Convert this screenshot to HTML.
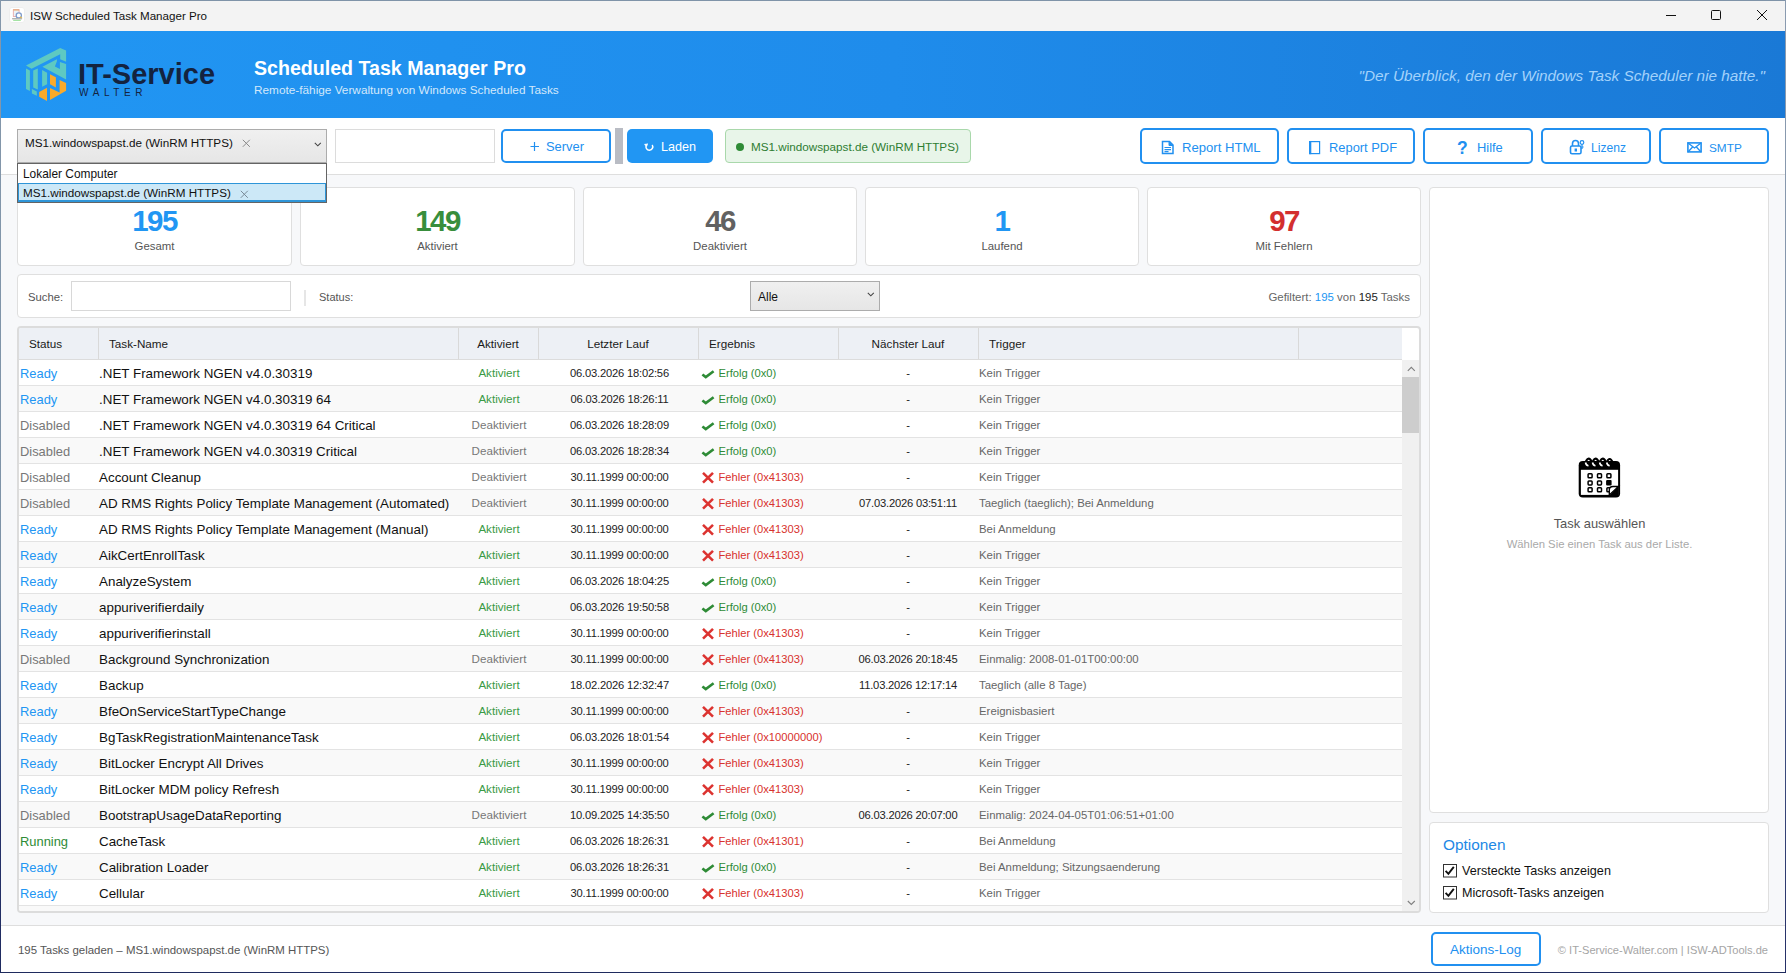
<!DOCTYPE html>
<html><head><meta charset="utf-8">
<style>
*{box-sizing:border-box;margin:0;padding:0}
html,body{width:1786px;height:973px;overflow:hidden}
body{position:relative;background:#f7f8fa;font-family:"Liberation Sans",sans-serif;color:#222}
.abs{position:absolute}
.t{position:absolute;line-height:1;white-space:nowrap}
#winborder{position:absolute;left:0;top:0;width:1786px;height:973px;border:1px solid #8496ab;border-bottom-color:#2a3a5a;pointer-events:none;z-index:50}
#titlebar{position:absolute;left:0;top:0;width:1786px;height:31px;background:#f3f3f3}
#header{position:absolute;left:0;top:31px;width:1786px;height:87px;background:linear-gradient(90deg,#2196f3 0%,#1f8ceb 50%,#1a79d6 100%)}
#toolbar{position:absolute;left:1px;top:118px;width:1784px;height:57px;background:#fff;border-bottom:1px solid #dedede}
.btn{position:absolute;top:129px;height:34px;border:2px solid #2190f0;border-radius:5px;background:#fff}
.card{position:absolute;background:#fff;border:1px solid #dfdfdf;border-radius:4px}
#table{position:absolute;left:17px;top:326px;width:1404px;height:587px;background:#fff;border:2px solid #dcdcdc;border-radius:4px;overflow:hidden}
.thead{position:absolute;left:0;top:0;width:1383px;height:32px;background:#edf0f5;border-bottom:1px solid #dcdcdc}
.thsep{position:absolute;top:0;width:1px;height:31px;background:#d9d9d9}
.row{position:absolute;left:19px;width:1383px;height:26px;border-bottom:1px solid #e3e3e3}
.row.odd{background:#fff}
.row.even{background:#f9f9f9}
.c{position:absolute;top:0;line-height:1;white-space:nowrap}
.c1{left:1px;font-size:12.9px;top:8px}
.c2{left:80px;font-size:13.4px;color:#111;top:7px}
.c3{left:440px;width:80px;text-align:center;font-size:11.6px;top:7px}
.c4{left:520.5px;width:160px;text-align:center;font-size:11.2px;letter-spacing:-0.2px;color:#222;top:8px}
.c5{left:699.5px;font-size:11.2px;top:8px}
.c6{left:819px;width:140px;text-align:center;font-size:11.2px;letter-spacing:-0.2px;color:#222;top:8px}
.c7{left:960px;font-size:11.4px;color:#666;top:8px}
.s-ready{color:#2196f3} .s-dis{color:#777} .s-run{color:#2e8b36}
.a-on{color:#3a9a45} .a-off{color:#777}
.r-ok{color:#2e8b36} .r-err{color:#d8322d}
.ic{position:absolute;left:682px}
</style></head><body>
<div id="titlebar">
 <svg class="abs" style="left:9px;top:7px" width="16" height="16" viewBox="0 0 16 16"><rect x="0.5" y="0.5" width="15" height="15" rx="2.5" fill="#fff" stroke="#eeeeee"/><rect x="4.3" y="2.6" width="5.8" height="6.8" fill="#eef3f8" stroke="#e5a1a1" stroke-width="0.8"/><rect x="4.3" y="2.4" width="5.8" height="1.2" fill="#e9b27a"/><circle cx="9.8" cy="8.4" r="2.6" fill="#fff" stroke="#7f9ccc" stroke-width="1.3"/><path d="M11.2 9.8 L13 11.4" stroke="#e6b84a" stroke-width="1.3"/><rect x="3" y="11" width="10" height="1.4" rx="0.6" fill="#b4b4b4"/><rect x="4.2" y="12.9" width="7.6" height="0.9" fill="#8fdc8f"/></svg>
 <div class="t" style="left:30px;top:10px;font-size:11.6px;color:#111;">ISW Scheduled Task Manager Pro</div>
 <svg class="abs" style="left:1666px;top:15px" width="10" height="1"><rect width="10" height="1" fill="#111"/></svg>
 <svg class="abs" style="left:1711px;top:10px" width="10" height="10"><rect x="0.5" y="0.5" width="9" height="9" fill="none" stroke="#111" stroke-width="1" rx="1"/></svg>
 <svg class="abs" style="left:1757px;top:10px" width="10" height="10"><path d="M0 0 L10 10 M10 0 L0 10" stroke="#111" stroke-width="1"/></svg>
</div>
<div id="header"></div>
<svg width="42" height="54" viewBox="0 0 42 54" style="position:absolute;left:26px;top:48px">
<g fill="#5ec9c2">
<polygon points="0,17.4 34.2,0 40.1,2.6 40.1,13.8 34.2,11.3 34.2,6.3 5.6,20.7"/>
<polygon points="0,20.4 3.9,22.4 3.9,43.1 0,41.1"/>
<polygon points="7.2,22.4 11.8,20.4 11.8,41.4 7.2,39.5"/>
<polygon points="5.9,41.1 10.8,43.4 10.8,47.7 5.9,45.4"/>
<polygon points="16.1,22 21.1,24.7 21.1,36.2 16.1,38.8"/>
<polygon points="16.4,18.8 30.9,11.2 30.9,13.2 28.9,18.4 33.9,21 33.9,14.1 40.1,16.1 40.1,31.6"/>
</g>
<g fill="#fbaa2a">
<polygon points="24,26.3 29.9,29.3 29.9,39.5 24,36.2"/>
<polygon points="24,40.1 33.6,44.5 33.6,31.9 40.1,35 40.1,42.8 24,52"/>
<polygon points="13.2,44.1 21,39.8 21,53 13.2,48.7"/>
</g>
</svg>
<div class="t" style="left:78px;top:60px;font-size:29px;color:#14233f;font-weight:bold">IT-Service</div>
<div class="t" style="left:79px;top:88px;font-size:10px;color:#14233f;letter-spacing:4.6px">WALTER</div>
<div class="t" style="left:254px;top:59px;font-size:19.6px;color:#fff;font-weight:bold">Scheduled Task Manager Pro</div>
<div class="t" style="left:254px;top:85px;font-size:11.8px;color:#d3e8fb;">Remote-fähige Verwaltung von Windows Scheduled Tasks</div>
<div class="t" style="right:21px;top:68px;font-size:15.3px;color:#a3d2fb;font-style:italic">"Der Überblick, den der Windows Task Scheduler nie hatte."</div>
<div id="toolbar"></div>

<!-- combo -->
<div class="abs" style="left:17px;top:129px;width:310px;height:34px;background:linear-gradient(#f0f0f0,#e6e6e6);border:1px solid #acacac"></div>
<div class="t" style="left:25px;top:137px;font-size:11.7px;color:#111;">MS1.windowspapst.de (WinRM HTTPS)</div>
<svg class="abs" style="left:242px;top:139px" width="9" height="9"><path d="M0.8 0.8 L7.8 7.8 M7.8 0.8 L0.8 7.8" stroke="#8a8a8a" stroke-width="1"/></svg>
<svg class="abs" style="left:314px;top:142px" width="8" height="6"><path d="M0.8 0.8 L3.8 3.8 L6.8 0.8" fill="none" stroke="#444" stroke-width="1.05"/></svg>
<div class="abs" style="left:335px;top:129px;width:160px;height:34px;border:1px solid #dcdcdc;background:#fff"></div>
<div class="btn" style="left:501px;width:110px"></div>
<svg class="abs" style="left:530px;top:141px" width="10" height="11"><path d="M4.5 1 V10 M0.5 5.5 H9" stroke="#2190f0" stroke-width="1.2"/></svg>
<div class="t" style="left:546px;top:141px;font-size:12.9px;color:#2190f0;">Server</div>
<div class="abs" style="left:615px;top:128px;width:8px;height:36px;background:#b9bcc4"></div>
<div class="abs" style="left:627px;top:129px;width:86px;height:34px;background:#2196f3;border-radius:5px"></div>
<svg class="abs" style="left:644px;top:143px" width="11" height="9" viewBox="0 0 11 9"><path d="M2.3 2.3 A3.4 3.4 0 1 0 8.2 2.0" fill="none" stroke="#fff" stroke-width="1.5"/><path d="M0.6 1.1 L2.6 2.6 L3.4 0.4" fill="none" stroke="#fff" stroke-width="1.4"/></svg>
<div class="t" style="left:661px;top:141px;font-size:12.6px;color:#fff;">Laden</div>
<div class="abs" style="left:725px;top:129px;width:246px;height:34px;background:#e8f5e9;border:1px solid #a9d8ab;border-radius:4px"></div>
<div class="abs" style="left:736px;top:143px;width:8px;height:8px;border-radius:50%;background:#2e8b36"></div>
<div class="t" style="left:751px;top:141px;font-size:11.7px;color:#2e7d32;">MS1.windowspapst.de (WinRM HTTPS)</div>

<div class="btn" style="left:1140px;top:128px;height:36px;width:139px"></div><svg class="abs" style="left:1161px;top:140px" width="14" height="15" viewBox="0 0 14 15"><path d="M1.5 1.5 H8.5 L12 5 V13.5 H1.5 Z" fill="none" stroke="#2190f0" stroke-width="1.5"/><path d="M8 1.5 V5.5 H12" fill="#2190f0" stroke="#2190f0" stroke-width="1"/><path d="M3.5 7.5 H10 M3.5 9.6 H10 M3.5 11.6 H7.5" stroke="#2190f0" stroke-width="1.1"/></svg><div class="t" style="left:1182px;top:141px;font-size:13.1px;color:#2190f0;">Report HTML</div>
<div class="btn" style="left:1287px;top:128px;height:36px;width:128px"></div><svg class="abs" style="left:1308px;top:140px" width="13" height="15" viewBox="0 0 13 15"><rect x="1.9" y="1.6" width="9.7" height="12" fill="none" stroke="#2190f0" stroke-width="1.2"/><rect x="1" y="1" width="2.3" height="13.2" fill="#2190f0"/></svg><div class="t" style="left:1329px;top:142px;font-size:12.9px;color:#2190f0;">Report PDF</div>
<div class="btn" style="left:1423px;top:128px;height:36px;width:110px"></div><div class="t" style="left:1457px;top:140px;font-size:17.5px;color:#2190f0;font-weight:bold">?</div><div class="t" style="left:1477px;top:142px;font-size:12.9px;color:#2190f0;">Hilfe</div>
<div class="btn" style="left:1541px;top:128px;height:36px;width:110px"></div><svg class="abs" style="left:1569px;top:139px" width="16" height="16" viewBox="0 0 16 16"><path d="M3.5 7 V4.5 Q3.5 1.5 6.5 1.5 Q9.5 1.5 9.5 4.5 V7" fill="none" stroke="#2190f0" stroke-width="1.6"/><rect x="1.5" y="7" width="10.5" height="7.8" rx="1.5" fill="none" stroke="#2190f0" stroke-width="1.6"/><rect x="5.6" y="9.5" width="2.4" height="3" fill="#2190f0"/><circle cx="13" cy="3.5" r="1.8" fill="none" stroke="#2190f0" stroke-width="1.2"/><path d="M13 5.3 V10 M13 8 H14.6" stroke="#2190f0" stroke-width="1.2"/></svg><div class="t" style="left:1591px;top:142px;font-size:12.1px;color:#2190f0;">Lizenz</div>
<div class="btn" style="left:1659px;top:128px;height:36px;width:110px"></div><svg class="abs" style="left:1687px;top:142px" width="15" height="11" viewBox="0 0 15 11"><rect x="0.9" y="0.9" width="13.2" height="9" fill="none" stroke="#2190f0" stroke-width="1.6"/><path d="M1 1 L7.5 6 L14 1 M1 10 L5.8 4.8 M14 10 L9.2 4.8" fill="none" stroke="#2190f0" stroke-width="1.3"/></svg><div class="t" style="left:1709px;top:143px;font-size:11.8px;color:#2190f0;">SMTP</div>

<!-- stats -->
<div class="card" style="left:17px;top:187px;width:275px;height:79px"></div>
<div class="card" style="left:300px;top:187px;width:275px;height:79px"></div>
<div class="card" style="left:583px;top:187px;width:274px;height:79px"></div>
<div class="card" style="left:865px;top:187px;width:274px;height:79px"></div>
<div class="card" style="left:1147px;top:187px;width:274px;height:79px"></div>
<div class="t" style="left:17px;width:275px;text-align:center;top:206px;font-size:29.5px;color:#2196f3;font-weight:bold;letter-spacing:-1.6px">195</div>
<div class="t" style="left:300px;width:275px;text-align:center;top:206px;font-size:29.5px;color:#388e3c;font-weight:bold;letter-spacing:-1.6px">149</div>
<div class="t" style="left:583px;width:274px;text-align:center;top:206px;font-size:29.5px;color:#616161;font-weight:bold;letter-spacing:-1.6px">46</div>
<div class="t" style="left:865px;width:274px;text-align:center;top:206px;font-size:29.5px;color:#2196f3;font-weight:bold;letter-spacing:-1.6px">1</div>
<div class="t" style="left:1147px;width:274px;text-align:center;top:206px;font-size:29.5px;color:#d32f2f;font-weight:bold;letter-spacing:-1.6px">97</div>
<div class="t" style="left:17px;width:275px;text-align:center;top:241px;font-size:11.4px;color:#555;">Gesamt</div>
<div class="t" style="left:300px;width:275px;text-align:center;top:241px;font-size:11.4px;color:#555;">Aktiviert</div>
<div class="t" style="left:583px;width:274px;text-align:center;top:241px;font-size:11.4px;color:#555;">Deaktiviert</div>
<div class="t" style="left:865px;width:274px;text-align:center;top:241px;font-size:11.4px;color:#555;">Laufend</div>
<div class="t" style="left:1147px;width:274px;text-align:center;top:241px;font-size:11.4px;color:#555;">Mit Fehlern</div>

<!-- filter -->
<div class="card" style="left:17px;top:274px;width:1404px;height:44px"></div>
<div class="t" style="left:28px;top:292px;font-size:11.3px;color:#555;">Suche:</div>
<div class="abs" style="left:71px;top:281px;width:220px;height:30px;background:#fff;border:1px solid #d8d8d8"></div>
<div class="abs" style="left:304px;top:290px;width:2px;height:16px;background:#e6e6e6"></div>
<div class="t" style="left:319px;top:292px;font-size:11px;color:#555;">Status:</div>
<div class="abs" style="left:750px;top:281px;width:130px;height:30px;background:linear-gradient(#f0f0f0,#e6e6e6);border:1px solid #acacac"></div>
<div class="t" style="left:758px;top:291px;font-size:12px;color:#111;">Alle</div>
<svg class="abs" style="left:867px;top:292px" width="8" height="6"><path d="M0.8 0.8 L3.8 3.8 L6.8 0.8" fill="none" stroke="#444" stroke-width="1.05"/></svg>
<div class="t" style="right:376px;top:292px;font-size:11.45px;color:#666;">Gefiltert: <span style="color:#2196f3">195</span> von <span style="color:#222">195</span> Tasks</div>

<!-- table -->
<div id="table">
 <div class="thead"></div>
 <div class="thsep" style="left:79px"></div>
 <div class="thsep" style="left:439px"></div>
 <div class="thsep" style="left:519px"></div>
 <div class="thsep" style="left:679px"></div>
 <div class="thsep" style="left:819px"></div>
 <div class="thsep" style="left:959px"></div>
 <div class="thsep" style="left:1279px"></div>
 <div class="abs" style="left:1383px;top:32px;width:17px;height:551px;background:#f0f0f0"></div>
 <div class="abs" style="left:1383px;top:49px;width:17px;height:56px;background:#cdcdcd"></div>
 <svg class="abs" style="left:1388px;top:38px" width="9" height="6"><path d="M0.8 4.8 L4.3 1.3 L7.8 4.8" fill="none" stroke="#808080" stroke-width="1.1"/></svg>
 <svg class="abs" style="left:1388px;top:572px" width="9" height="6"><path d="M0.8 1 L4.3 4.5 L7.8 1" fill="none" stroke="#808080" stroke-width="1.1"/></svg>
 <div class="abs" style="left:0;top:578px;width:1383px;height:5px;background:#f9f9f9"></div>
</div>
<div class="t" style="left:29px;top:338px;font-size:11.7px;color:#1a1a1a;">Status</div>
<div class="t" style="left:109px;top:338px;font-size:11.7px;color:#1a1a1a;">Task-Name</div>
<div class="t" style="left:458px;width:80px;text-align:center;top:338px;font-size:11.7px;color:#1a1a1a;">Aktiviert</div>
<div class="t" style="left:538px;width:160px;text-align:center;top:338px;font-size:11.7px;color:#1a1a1a;">Letzter Lauf</div>
<div class="t" style="left:709px;top:338px;font-size:11.7px;color:#1a1a1a;">Ergebnis</div>
<div class="t" style="left:838px;width:140px;text-align:center;top:338px;font-size:11.7px;color:#1a1a1a;">Nächster Lauf</div>
<div class="t" style="left:989px;top:338px;font-size:11.7px;color:#1a1a1a;">Trigger</div>
<div id="rows">
<div class="row odd" style="top:360px"><span class="c c1 s-ready">Ready</span><span class="c c2">.NET Framework NGEN v4.0.30319</span><span class="c c3 a-on">Aktiviert</span><span class="c c4">06.03.2026 18:02:56</span><svg class="ic" width="14" height="10" viewBox="0 0 14 10" style="top:10px"><path d="M1.4 4.4 L4.8 7.1 L12.6 1.3" fill="none" stroke="#2e8b36" stroke-width="2.6"/></svg><span class="c c5 r-ok">Erfolg (0x0)</span><span class="c c6">-</span><span class="c c7">Kein Trigger</span></div>
<div class="row even" style="top:386px"><span class="c c1 s-ready">Ready</span><span class="c c2">.NET Framework NGEN v4.0.30319 64</span><span class="c c3 a-on">Aktiviert</span><span class="c c4">06.03.2026 18:26:11</span><svg class="ic" width="14" height="10" viewBox="0 0 14 10" style="top:10px"><path d="M1.4 4.4 L4.8 7.1 L12.6 1.3" fill="none" stroke="#2e8b36" stroke-width="2.6"/></svg><span class="c c5 r-ok">Erfolg (0x0)</span><span class="c c6">-</span><span class="c c7">Kein Trigger</span></div>
<div class="row odd" style="top:412px"><span class="c c1 s-dis">Disabled</span><span class="c c2">.NET Framework NGEN v4.0.30319 64 Critical</span><span class="c c3 a-off">Deaktiviert</span><span class="c c4">06.03.2026 18:28:09</span><svg class="ic" width="14" height="10" viewBox="0 0 14 10" style="top:10px"><path d="M1.4 4.4 L4.8 7.1 L12.6 1.3" fill="none" stroke="#2e8b36" stroke-width="2.6"/></svg><span class="c c5 r-ok">Erfolg (0x0)</span><span class="c c6">-</span><span class="c c7">Kein Trigger</span></div>
<div class="row even" style="top:438px"><span class="c c1 s-dis">Disabled</span><span class="c c2">.NET Framework NGEN v4.0.30319 Critical</span><span class="c c3 a-off">Deaktiviert</span><span class="c c4">06.03.2026 18:28:34</span><svg class="ic" width="14" height="10" viewBox="0 0 14 10" style="top:10px"><path d="M1.4 4.4 L4.8 7.1 L12.6 1.3" fill="none" stroke="#2e8b36" stroke-width="2.6"/></svg><span class="c c5 r-ok">Erfolg (0x0)</span><span class="c c6">-</span><span class="c c7">Kein Trigger</span></div>
<div class="row odd" style="top:464px"><span class="c c1 s-dis">Disabled</span><span class="c c2">Account Cleanup</span><span class="c c3 a-off">Deaktiviert</span><span class="c c4">30.11.1999 00:00:00</span><svg class="ic" width="14" height="13" viewBox="0 0 14 13" style="top:7px"><path d="M2 1.9 L12 11.6 M12 1.9 L2 11.6" fill="none" stroke="#dc3330" stroke-width="2.6"/></svg><span class="c c5 r-err">Fehler (0x41303)</span><span class="c c6">-</span><span class="c c7">Kein Trigger</span></div>
<div class="row even" style="top:490px"><span class="c c1 s-dis">Disabled</span><span class="c c2">AD RMS Rights Policy Template Management (Automated)</span><span class="c c3 a-off">Deaktiviert</span><span class="c c4">30.11.1999 00:00:00</span><svg class="ic" width="14" height="13" viewBox="0 0 14 13" style="top:7px"><path d="M2 1.9 L12 11.6 M12 1.9 L2 11.6" fill="none" stroke="#dc3330" stroke-width="2.6"/></svg><span class="c c5 r-err">Fehler (0x41303)</span><span class="c c6">07.03.2026 03:51:11</span><span class="c c7">Taeglich (taeglich); Bei Anmeldung</span></div>
<div class="row odd" style="top:516px"><span class="c c1 s-ready">Ready</span><span class="c c2">AD RMS Rights Policy Template Management (Manual)</span><span class="c c3 a-on">Aktiviert</span><span class="c c4">30.11.1999 00:00:00</span><svg class="ic" width="14" height="13" viewBox="0 0 14 13" style="top:7px"><path d="M2 1.9 L12 11.6 M12 1.9 L2 11.6" fill="none" stroke="#dc3330" stroke-width="2.6"/></svg><span class="c c5 r-err">Fehler (0x41303)</span><span class="c c6">-</span><span class="c c7">Bei Anmeldung</span></div>
<div class="row even" style="top:542px"><span class="c c1 s-ready">Ready</span><span class="c c2">AikCertEnrollTask</span><span class="c c3 a-on">Aktiviert</span><span class="c c4">30.11.1999 00:00:00</span><svg class="ic" width="14" height="13" viewBox="0 0 14 13" style="top:7px"><path d="M2 1.9 L12 11.6 M12 1.9 L2 11.6" fill="none" stroke="#dc3330" stroke-width="2.6"/></svg><span class="c c5 r-err">Fehler (0x41303)</span><span class="c c6">-</span><span class="c c7">Kein Trigger</span></div>
<div class="row odd" style="top:568px"><span class="c c1 s-ready">Ready</span><span class="c c2">AnalyzeSystem</span><span class="c c3 a-on">Aktiviert</span><span class="c c4">06.03.2026 18:04:25</span><svg class="ic" width="14" height="10" viewBox="0 0 14 10" style="top:10px"><path d="M1.4 4.4 L4.8 7.1 L12.6 1.3" fill="none" stroke="#2e8b36" stroke-width="2.6"/></svg><span class="c c5 r-ok">Erfolg (0x0)</span><span class="c c6">-</span><span class="c c7">Kein Trigger</span></div>
<div class="row even" style="top:594px"><span class="c c1 s-ready">Ready</span><span class="c c2">appuriverifierdaily</span><span class="c c3 a-on">Aktiviert</span><span class="c c4">06.03.2026 19:50:58</span><svg class="ic" width="14" height="10" viewBox="0 0 14 10" style="top:10px"><path d="M1.4 4.4 L4.8 7.1 L12.6 1.3" fill="none" stroke="#2e8b36" stroke-width="2.6"/></svg><span class="c c5 r-ok">Erfolg (0x0)</span><span class="c c6">-</span><span class="c c7">Kein Trigger</span></div>
<div class="row odd" style="top:620px"><span class="c c1 s-ready">Ready</span><span class="c c2">appuriverifierinstall</span><span class="c c3 a-on">Aktiviert</span><span class="c c4">30.11.1999 00:00:00</span><svg class="ic" width="14" height="13" viewBox="0 0 14 13" style="top:7px"><path d="M2 1.9 L12 11.6 M12 1.9 L2 11.6" fill="none" stroke="#dc3330" stroke-width="2.6"/></svg><span class="c c5 r-err">Fehler (0x41303)</span><span class="c c6">-</span><span class="c c7">Kein Trigger</span></div>
<div class="row even" style="top:646px"><span class="c c1 s-dis">Disabled</span><span class="c c2">Background Synchronization</span><span class="c c3 a-off">Deaktiviert</span><span class="c c4">30.11.1999 00:00:00</span><svg class="ic" width="14" height="13" viewBox="0 0 14 13" style="top:7px"><path d="M2 1.9 L12 11.6 M12 1.9 L2 11.6" fill="none" stroke="#dc3330" stroke-width="2.6"/></svg><span class="c c5 r-err">Fehler (0x41303)</span><span class="c c6">06.03.2026 20:18:45</span><span class="c c7">Einmalig: 2008-01-01T00:00:00</span></div>
<div class="row odd" style="top:672px"><span class="c c1 s-ready">Ready</span><span class="c c2">Backup</span><span class="c c3 a-on">Aktiviert</span><span class="c c4">18.02.2026 12:32:47</span><svg class="ic" width="14" height="10" viewBox="0 0 14 10" style="top:10px"><path d="M1.4 4.4 L4.8 7.1 L12.6 1.3" fill="none" stroke="#2e8b36" stroke-width="2.6"/></svg><span class="c c5 r-ok">Erfolg (0x0)</span><span class="c c6">11.03.2026 12:17:14</span><span class="c c7">Taeglich (alle 8 Tage)</span></div>
<div class="row even" style="top:698px"><span class="c c1 s-ready">Ready</span><span class="c c2">BfeOnServiceStartTypeChange</span><span class="c c3 a-on">Aktiviert</span><span class="c c4">30.11.1999 00:00:00</span><svg class="ic" width="14" height="13" viewBox="0 0 14 13" style="top:7px"><path d="M2 1.9 L12 11.6 M12 1.9 L2 11.6" fill="none" stroke="#dc3330" stroke-width="2.6"/></svg><span class="c c5 r-err">Fehler (0x41303)</span><span class="c c6">-</span><span class="c c7">Ereignisbasiert</span></div>
<div class="row odd" style="top:724px"><span class="c c1 s-ready">Ready</span><span class="c c2">BgTaskRegistrationMaintenanceTask</span><span class="c c3 a-on">Aktiviert</span><span class="c c4">06.03.2026 18:01:54</span><svg class="ic" width="14" height="13" viewBox="0 0 14 13" style="top:7px"><path d="M2 1.9 L12 11.6 M12 1.9 L2 11.6" fill="none" stroke="#dc3330" stroke-width="2.6"/></svg><span class="c c5 r-err">Fehler (0x10000000)</span><span class="c c6">-</span><span class="c c7">Kein Trigger</span></div>
<div class="row even" style="top:750px"><span class="c c1 s-ready">Ready</span><span class="c c2">BitLocker Encrypt All Drives</span><span class="c c3 a-on">Aktiviert</span><span class="c c4">30.11.1999 00:00:00</span><svg class="ic" width="14" height="13" viewBox="0 0 14 13" style="top:7px"><path d="M2 1.9 L12 11.6 M12 1.9 L2 11.6" fill="none" stroke="#dc3330" stroke-width="2.6"/></svg><span class="c c5 r-err">Fehler (0x41303)</span><span class="c c6">-</span><span class="c c7">Kein Trigger</span></div>
<div class="row odd" style="top:776px"><span class="c c1 s-ready">Ready</span><span class="c c2">BitLocker MDM policy Refresh</span><span class="c c3 a-on">Aktiviert</span><span class="c c4">30.11.1999 00:00:00</span><svg class="ic" width="14" height="13" viewBox="0 0 14 13" style="top:7px"><path d="M2 1.9 L12 11.6 M12 1.9 L2 11.6" fill="none" stroke="#dc3330" stroke-width="2.6"/></svg><span class="c c5 r-err">Fehler (0x41303)</span><span class="c c6">-</span><span class="c c7">Kein Trigger</span></div>
<div class="row even" style="top:802px"><span class="c c1 s-dis">Disabled</span><span class="c c2">BootstrapUsageDataReporting</span><span class="c c3 a-off">Deaktiviert</span><span class="c c4">10.09.2025 14:35:50</span><svg class="ic" width="14" height="10" viewBox="0 0 14 10" style="top:10px"><path d="M1.4 4.4 L4.8 7.1 L12.6 1.3" fill="none" stroke="#2e8b36" stroke-width="2.6"/></svg><span class="c c5 r-ok">Erfolg (0x0)</span><span class="c c6">06.03.2026 20:07:00</span><span class="c c7">Einmalig: 2024-04-05T01:06:51+01:00</span></div>
<div class="row odd" style="top:828px"><span class="c c1 s-run">Running</span><span class="c c2">CacheTask</span><span class="c c3 a-on">Aktiviert</span><span class="c c4">06.03.2026 18:26:31</span><svg class="ic" width="14" height="13" viewBox="0 0 14 13" style="top:7px"><path d="M2 1.9 L12 11.6 M12 1.9 L2 11.6" fill="none" stroke="#dc3330" stroke-width="2.6"/></svg><span class="c c5 r-err">Fehler (0x41301)</span><span class="c c6">-</span><span class="c c7">Bei Anmeldung</span></div>
<div class="row even" style="top:854px"><span class="c c1 s-ready">Ready</span><span class="c c2">Calibration Loader</span><span class="c c3 a-on">Aktiviert</span><span class="c c4">06.03.2026 18:26:31</span><svg class="ic" width="14" height="10" viewBox="0 0 14 10" style="top:10px"><path d="M1.4 4.4 L4.8 7.1 L12.6 1.3" fill="none" stroke="#2e8b36" stroke-width="2.6"/></svg><span class="c c5 r-ok">Erfolg (0x0)</span><span class="c c6">-</span><span class="c c7">Bei Anmeldung; Sitzungsaenderung</span></div>
<div class="row odd" style="top:880px"><span class="c c1 s-ready">Ready</span><span class="c c2">Cellular</span><span class="c c3 a-on">Aktiviert</span><span class="c c4">30.11.1999 00:00:00</span><svg class="ic" width="14" height="13" viewBox="0 0 14 13" style="top:7px"><path d="M2 1.9 L12 11.6 M12 1.9 L2 11.6" fill="none" stroke="#dc3330" stroke-width="2.6"/></svg><span class="c c5 r-err">Fehler (0x41303)</span><span class="c c6">-</span><span class="c c7">Kein Trigger</span></div>
</div>

<!-- right panel -->
<div class="card" style="left:1429px;top:187px;width:340px;height:626px"></div>
<svg class="abs" style="left:1575px;top:453px" width="50" height="48" viewBox="0 0 50 48">
<path d="M8 8.1 H41 Q45.1 8.1 45.1 12.2 V40.5 Q45.1 44.6 41 44.6 H7.8 Q3.7 44.6 3.7 40.5 V12.2 Q3.7 8.1 7.8 8.1 Z" fill="#000"/>
<rect x="5.9" y="16.8" width="37.2" height="25.1" fill="#fff"/>
<g fill="none" stroke="#000" stroke-width="2.2">
<path d="M9.8 11 Q13.3 1.5 16.8 9"/><path d="M16.8 11 Q20.2 1.5 23.7 9"/><path d="M23.9 11 Q27.4 1.5 30.9 9"/><path d="M31 11 Q34.5 1.5 38 10"/>
</g>
<g fill="none" stroke="#fff" stroke-width="1.6">
<path d="M10.5 9.5 Q11 12.5 13.5 12.8"/><path d="M17.5 9.5 Q18 12.5 20.5 12.8"/><path d="M24.6 9.5 Q25.1 12.5 27.6 12.8"/><path d="M31.7 9.5 Q32.2 12.5 34.7 12.8"/>
</g>
<g fill="none" stroke="#000" stroke-width="1.5">
<rect x="13.1" y="20.8" width="4" height="4" rx="0.8"/><rect x="22.5" y="20.8" width="4" height="4" rx="0.8"/><rect x="31.9" y="20.8" width="4" height="4" rx="0.8"/>
<rect x="13.1" y="27.9" width="4" height="4" rx="0.8"/><rect x="22.5" y="27.9" width="4" height="4" rx="0.8"/>
<rect x="13.1" y="34.8" width="4" height="4" rx="0.8"/><rect x="22.5" y="34.8" width="4" height="4" rx="0.8"/><rect x="31.9" y="34.8" width="4" height="4" rx="0.8"/>
</g>
<rect x="31.1" y="27.1" width="5.5" height="5.5" rx="1" fill="#000"/>
<path d="M34.3 42 V37 Q34.3 33.5 38 33.5 H43.5 Z" fill="#fff" stroke="#000" stroke-width="1.4"/>
<path d="M34.3 42.5 L43.5 33.5 V41 Q43.5 42.5 42 42.5 Z" fill="#000"/>
</svg>
<div class="t" style="left:1430px;width:339px;text-align:center;top:518px;font-size:12.9px;color:#555;">Task auswählen</div>
<div class="t" style="left:1430px;width:339px;text-align:center;top:539px;font-size:11.3px;color:#a9a9a9;">Wählen Sie einen Task aus der Liste.</div>

<div class="card" style="left:1429px;top:822px;width:340px;height:91px"></div>
<div class="t" style="left:1443px;top:837px;font-size:15.4px;color:#1e88e5;">Optionen</div>
<svg class="abs" style="left:1443px;top:864px" width="14" height="14"><rect x="0.5" y="0.5" width="13" height="12.5" fill="#fff" stroke="#333"/><path d="M2.6 6.8 L5.4 9.8 L10.8 2.8" fill="none" stroke="#111" stroke-width="1.9"/></svg>
<div class="t" style="left:1462px;top:865px;font-size:12.6px;color:#111;">Versteckte Tasks anzeigen</div>
<svg class="abs" style="left:1443px;top:886px" width="14" height="14"><rect x="0.5" y="0.5" width="13" height="12.5" fill="#fff" stroke="#333"/><path d="M2.6 6.8 L5.4 9.8 L10.8 2.8" fill="none" stroke="#111" stroke-width="1.9"/></svg>
<div class="t" style="left:1462px;top:887px;font-size:12.6px;color:#111;">Microsoft-Tasks anzeigen</div>

<!-- status bar -->
<div class="abs" style="left:1px;top:925px;width:1784px;height:47px;background:#fff;border-top:1px solid #dedede"></div>
<div class="t" style="left:18px;top:945px;font-size:11.45px;color:#555;">195 Tasks geladen – MS1.windowspapst.de (WinRM HTTPS)</div>
<div class="btn" style="left:1431px;top:932px;width:110px;height:34px"></div>
<div class="t" style="left:1450px;top:943px;font-size:13.5px;color:#2190f0;">Aktions-Log</div>
<div class="t" style="right:18px;top:945px;font-size:11.1px;color:#a5a5a5;">© IT-Service-Walter.com | ISW-ADTools.de</div>

<!-- dropdown popup -->
<div class="abs" style="left:17px;top:163px;width:310px;height:40px;background:#fff;border:1px solid #646464;z-index:10"></div>
<div class="t" style="left:23px;top:169px;font-size:11.9px;color:#111;z-index:11;">Lokaler Computer</div>
<div class="abs" style="left:18px;top:183px;width:308px;height:19px;background:#cce8f7;border:1px solid #2e95d8;border-bottom-width:2px;z-index:11"></div>
<div class="t" style="left:23px;top:187px;font-size:11.7px;color:#111;z-index:12;">MS1.windowspapst.de (WinRM HTTPS)</div>
<svg class="abs" style="left:240px;top:190px;z-index:12" width="9" height="9"><path d="M0.8 0.8 L7.8 7.8 M7.8 0.8 L0.8 7.8" stroke="#7a8a98" stroke-width="1"/></svg>

<div class="abs" style="left:0;top:0;width:1786px;height:1px;background:#7f93a8;z-index:50"></div>
<div class="abs" style="left:0;top:0;width:1px;height:973px;background:linear-gradient(#8497ab 0%,#7d93a8 60%,#3d5a8a 75%,#25316a 85%,#1f2b60 100%);z-index:50"></div>
<div class="abs" style="left:1785px;top:0;width:1px;height:973px;background:linear-gradient(#8a9bb0 0%,#8192a8 55%,#3f4f80 75%,#242e66 100%);z-index:50"></div>
<div class="abs" style="left:0;top:972px;width:1786px;height:1px;background:#1f2b5e;z-index:50"></div>
</body></html>
